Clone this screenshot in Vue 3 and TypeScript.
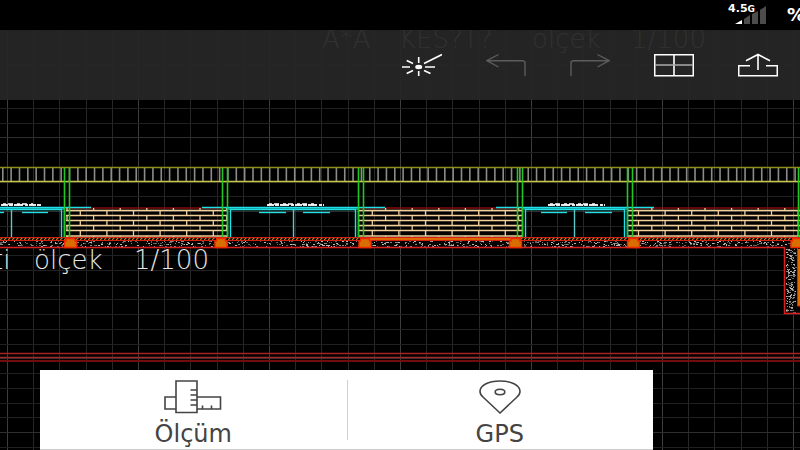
<script setup lang="ts">
interface Span { from: number; to: number }
interface Door { beam: Span; outer: Span; middle: number; arrows: Span[]; note: Span }
interface Wall { from: number; to: number; joint: number }
interface Speck { x: number; y: number; w: number; tone: string }

const gridX = Array.from({ length: 31 }, (_, i) => ({ at: Math.round(7 + i * 26.2), major: i % 5 === 0 }))
const gridY = Array.from({ length: 29 }, (_, i) => ({ at: Math.floor(34.6 + i * 14.74), major: i % 5 === 2 }))
const slats = Array.from({ length: 96 }, (_, i) => 2.8 + i * 8.34)

const posts = [64, 69, 222, 227, 358, 363, 517, 522, 627, 632, 798]
const footings = [70.5, 221, 365, 515.5, 633.5, 797]

const doors: Door[] = [
  { beam: { from: -20, to: 91 }, outer: { from: -60, to: 64 }, middle: 11.5, arrows: [{ from: -10, to: 4 }, { from: 22, to: 48 }], note: { from: 1, to: 42 } },
  { beam: { from: 202, to: 385 }, outer: { from: 227, to: 358 }, middle: 293.5, arrows: [{ from: 259, to: 286 }, { from: 303, to: 330 }], note: { from: 267, to: 324 } },
  { beam: { from: 496, to: 654 }, outer: { from: 522, to: 627 }, middle: 574.5, arrows: [{ from: 541, to: 567 }, { from: 585, to: 612 }], note: { from: 548, to: 605 } },
]

const walls: Wall[] = [
  { from: 66, to: 227, joint: 67 },
  { from: 359, to: 522, joint: 359 },
  { from: 628, to: 800, joint: 625.2 },
]
const courses = [208, 210.5, 215.5, 220.5, 225.5, 230.5, 236, 238]

function brickPath(wall: Wall): string {
  const parts: string[] = []
  for (let c = 1; c < courses.length - 1; c++) parts.push(`M${wall.from} ${courses[c]}H${wall.to}`)
  for (let c = 0; c < courses.length - 1; c++) {
    const shift = c % 2 === 0 ? 0 : 13.3
    for (let x = wall.joint + shift; x < wall.to; x += 26.6) {
      if (x > wall.from) parts.push(`M${x.toFixed(1)} ${courses[c]}V${courses[c + 1]}`)
    }
  }
  return parts.join('')
}

let seed = 17
function random(): number {
  seed = (seed * 16807) % 2147483647
  return seed / 2147483647
}
function scatter(count: number, x: number, y: number, w: number, h: number): Speck[] {
  const tones = ['#b8b8b8', '#8a8a8a', '#606060']
  return Array.from({ length: count }, () => ({
    x: Math.floor(x + random() * w),
    y: Math.floor(y + random() * h),
    w: random() > 0.55 ? 2 : 1,
    tone: tones[Math.floor(random() * 3)],
  }))
}
const specks = [...scatter(780, 0, 241, 800, 6), ...scatter(170, 786, 249, 10, 64)]
</script>

<template>
  <div class="app">
    <header class="status">
      <span class="network">4.5<small>G</small></span>
      <svg class="signal" viewBox="0 0 32 18" aria-hidden="true">
        <path d="M0 18L7 14V18Z" fill="#fff" />
        <path d="M9 18V13L15 9V18ZM17 18V8L23 5V18ZM25 18V4L31 0V18Z" fill="#4c4c4c" />
      </svg>
      <span class="battery">%</span>
    </header>

    <main class="workspace">
      <svg class="drawing" viewBox="0 30 800 420" preserveAspectRatio="xMidYMid slice">
        <defs>
          <pattern id="hatch" width="4" height="3" patternUnits="userSpaceOnUse">
            <path d="M0 3L3 0" stroke="#c87a28" stroke-width="1.2" />
          </pattern>
        </defs>
        <g shape-rendering="crispEdges">
          <rect v-for="l in gridX" :key="'x' + l.at" :x="l.at" y="30" width="1" height="420" :fill="l.major ? '#3c3c3c' : '#272727'" />
          <rect v-for="l in gridY" :key="'y' + l.at" x="0" :y="l.at" width="800" height="1" :fill="l.major ? '#2e2e2e' : '#202020'" />
        </g>

        <path v-for="x in slats" :key="x" :d="`M${x} 168V181`" stroke="#8c8c8c" stroke-width="1.6" />
        <path d="M0 167.5H800" stroke="#8f8f1c" stroke-width="1.3" />
        <path d="M0 181.5H800" stroke="#c6c648" stroke-width="1.3" />

        <path d="M66 208H227M359 208H522M628 208H800" stroke="#850808" stroke-width="1.4" />
        <path v-for="w in walls" :key="w.from" :d="brickPath(w)" class="brick" />

        <g v-for="d in doors" :key="d.middle" class="door">
          <path :d="`M${d.outer.from} 208.5H${d.outer.to}`" stroke="#0c8080" stroke-width="3" />
          <path :d="`M${d.beam.from} 207.5H${d.beam.to}`" />
          <path :d="`M${d.outer.from + 3.5} 237V209.5H${d.outer.to - 2.5}V237`" />
          <path :d="`M${d.outer.from + 0.5} 237V208M${d.outer.to + 0.5} 237V208`" />
          <path :d="`M${d.middle} 210V237`" stroke="#58c8c8" />
          <path v-for="a in d.arrows" :key="a.from" :d="`M${a.from} 212.5H${a.to}`" />
          <path :d="`M${d.note.from} 205H${d.note.to}`" stroke="#e8e8e8" stroke-width="2" stroke-dasharray="7 1 4 1 9 2 3 1" />
          <path :d="`M${d.note.from + 2} 204H${d.note.to - 9}`" stroke="#fff" stroke-dasharray="3 2 5 4" />
        </g>

        <path v-for="x in posts" :key="x" :d="`M${x + 0.5} 168V237`" stroke="#22c822" stroke-width="1.6" />

        <rect x="0" y="237" width="800" height="11" fill="#080402" />
        <rect x="784" y="248" width="16" height="66" fill="#080402" />
        <rect v-for="(s, i) in specks" :key="i" :x="s.x" :y="s.y" :width="s.w" height="1" :fill="s.tone" />
        <rect x="0" y="238" width="800" height="3" fill="url(#hatch)" />
        <rect x="365" y="238" width="150" height="3" fill="#e06800" />
        <path d="M0 237.5H800M0 240.5H800" stroke="#d42010" />
        <path d="M0 247.5H784.5V313.5H800" fill="none" stroke="#d82020" stroke-width="1.5" />
        <path d="M797.5 248V306H800" fill="#e05800" stroke="#f02000" />
        <path d="M798 249H800V305H798Z" fill="#e06800" />
        <g v-for="x in footings" :key="x" :transform="`translate(${x} 238)`">
          <path d="M-4.5 .5H4.5V3H6V9.5H-6V3H-4.5Z" fill="#d86e00" stroke="#f02800" stroke-width="1.4" />
        </g>

        <path d="M0 353.5H800" stroke="#a82222" stroke-width="1.4" />
        <path d="M0 357.5H800" stroke="#a02828" stroke-width="1.4" />
        <path d="M0 361H800" stroke="#700c0c" stroke-width="2" />

        <g class="caption">
          <text x="-7" y="269">ti</text>
          <text x="34" y="269">ölçek</text>
          <text x="134" y="269">1/100</text>
        </g>
        <g class="caption">
          <text x="322" y="48">A*A</text>
          <text x="399" y="48">KES?T?</text>
          <text x="532" y="48">ölçek</text>
          <text x="631" y="48">1/100</text>
        </g>
      </svg>

      <nav class="toolbar" aria-label="Drawing tools">
        <button type="button" aria-label="Laser">
          <svg viewBox="0 0 40 24" class="icon">
            <path d="M0 14H8M23 14H33M16.700 4V10M16.700 18V23M4.700 7.500L11 10.500M22 10.500L40 1.500M4.700 20.500L11 17.500M22 17.500L28.500 20.500" />
            <ellipse cx="16.700" cy="14" rx="3.500" ry="2.200" fill="#fff" stroke="none" />
          </svg>
        </button>
        <button type="button" aria-label="Undo" disabled>
          <svg viewBox="0 0 40 24" class="icon thin"><path d="M12.500 1.500L.8 7.700L12.500 14M.8 7.700H36Q39 7.700 39 9.500V23" /></svg>
        </button>
        <button type="button" aria-label="Redo" disabled>
          <svg viewBox="0 0 40 24" class="icon thin"><path d="M27.500 1.500L39.200 7.700L27.500 14M39.200 7.700H4Q1 7.700 1 9.500V23" /></svg>
        </button>
        <button type="button" aria-label="Layouts">
          <svg viewBox="0 0 40 24" class="icon"><path d="M.7 1.700H39.300V22.700H.7ZM20 2V23" /><path d="M1 12H39" stroke="#aaa" /></svg>
        </button>
        <button type="button" aria-label="Share">
          <svg viewBox="0 0 40 24" class="icon"><path d="M12 12.700H.7V22.700H39.300V12.700H28M20 17V1.500M8 7.800L20 1.500L32 7.800" /></svg>
        </button>
      </nav>

      <section class="panel">
        <button type="button">
          <svg class="ruler" viewBox="0 0 58 34" aria-hidden="true">
            <path d="M12 17H1V29H12M33 17H56.500V29H33M12 1H33V32.500H12ZM26.500 10H33M26.500 15H33M26.500 20H33M26.500 25H33M38.500 25.500V29M47.500 25.500V29" />
          </svg>
          <span>Ölçüm</span>
        </button>
        <button type="button">
          <svg class="pin" viewBox="0 0 42 34" aria-hidden="true">
            <path d="M21 33L4.500 17.500C2 15.500 1 14 1 11.500C1 5.500 9 1 21 1S41 5.500 41 11.500C41 14 40 15.500 37.500 17.500Z" />
            <ellipse cx="21" cy="12" rx="4.800" ry="2.700" />
          </svg>
          <span>GPS</span>
        </button>
      </section>
    </main>
  </div>
</template>

<style>
body { margin: 0; background: #000; }
</style>

<style scoped>
.app {
  display: flex;
  flex-direction: column;
  min-height: 100vh;
  overflow: hidden;
  background: #000;
  font-family: "DejaVu Sans", sans-serif;
}
.status {
  display: flex;
  justify-content: flex-end;
  height: 30px;
  overflow: hidden;
  color: #fff;
  font-weight: bold;
}
.network {
  font-size: 11px;
  line-height: 18px;
}
.network small { font-size: 9px; }
.signal {
  width: 32px;
  height: 18px;
  margin: 6px 20px 0 -20px;
}
.battery {
  width: 13px;
  font-size: 18px;
  line-height: 30px;
}
.workspace {
  position: relative;
  flex: 1;
  display: flex;
  flex-direction: column;
  justify-content: space-between;
}
.drawing {
  position: absolute;
  inset: 0;
  width: 100%;
  height: 100%;
}
.brick { fill: none; stroke: #f2cf98; stroke-width: 1.3; }
.door path { fill: none; }
.door { stroke: #20e0e8; stroke-width: 1.4; }
.caption {
  fill: #e4e4e4;
  font-family: "DejaVu Sans", sans-serif;
  font-size: 26px;
  font-weight: 200;
}
.toolbar {
  position: relative;
  display: flex;
  justify-content: flex-end;
  align-items: center;
  gap: 44px;
  height: 70px;
  padding: 0 22px;
  background: rgba(38, 38, 38, 0.95);
}
button {
  border: 0;
  padding: 0;
  background: none;
  font-family: inherit;
}
.toolbar button { height: 24px; }
.icon {
  display: block;
  width: 40px;
  height: 24px;
  fill: none;
  stroke: #fff;
  stroke-width: 1.6;
}
.thin { stroke: #5c5c5c; stroke-width: 1.4; }
.panel {
  position: relative;
  display: grid;
  grid-template-columns: 1fr 1fr;
  box-sizing: border-box;
  height: 80px;
  margin: 0 147px 0 40px;
  background: #fff;
  border-bottom: 1px solid #ccc;
}
.panel button {
  display: flex;
  flex-direction: column;
  align-items: center;
  gap: 6px;
  padding-top: 10px;
  color: #444;
  font-size: 24px;
  line-height: 28px;
}
.panel button + button {
  background: linear-gradient(#d0d0d0, #d0d0d0) left center / 1px 60px no-repeat;
}
.ruler, .pin {
  height: 34px;
  fill: none;
  stroke: #444;
  stroke-width: 1.6;
}
.ruler { width: 58px; }
.pin { width: 42px; }
</style>
